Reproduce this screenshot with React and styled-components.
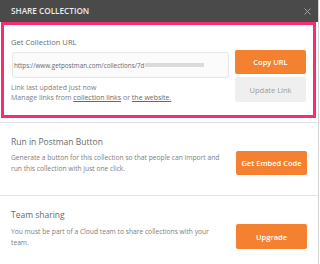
import React from "react";
import styled, { createGlobalStyle } from "styled-components";

const Global = createGlobalStyle`
  html, body { margin: 0; padding: 0; background: #fff; }
  body { font-family: "Open Sans", "Liberation Sans", sans-serif; }
  * { box-sizing: border-box; }
`;

const Modal = styled.div`
  width: 319px;
  height: 264px;
  border-right: 1px solid #d4d4d4;
  background: #fff;
  overflow: hidden;
`;

const Header = styled.header`
  height: 22px;
  background: #4a4a4a;
  display: flex;
  align-items: center;
  justify-content: space-between;
  padding: 0 7px 0 11px;
`;

const Title = styled.h1`
  margin: 0;
  color: #ececec;
  font-size: 8.2px;
  font-weight: 600;
  line-height: 10px;
`;

const Close = styled.svg`
  width: 7px;
  height: 7px;
  display: block;
`;

const Section = styled.section`
  border-bottom: 1px solid #e2e2e2;
  padding: ${(p) => (p.$highlight ? "0 0 4px 0" : "14px 11px 20px 11px")};
`;

const Highlight = styled.div`
  margin: 0 2px 0 1px;
  border: 3px solid #f62e6f;
  padding: 12px 6px 12px 7px;
`;

const Heading = styled.h2`
  margin: 0 0 ${(p) => p.$gap || 4}px 0;
  color: #6a6a6a;
  font-size: ${(p) => p.$size || 8.5}px;
  font-weight: 400;
  line-height: 10px;
`;

const UrlGrid = styled.div`
  display: grid;
  grid-template-columns: 218px 71px;
  column-gap: 6px;
`;

const LeftCol = styled.div`
  padding-top: 2px;
`;

const RightCol = styled.div`
  display: flex;
  flex-direction: column;
  gap: 3px;
`;

const UrlField = styled.div`
  height: 26px;
  margin-left: 1px;
  border: 1px solid #e6e6e6;
  border-radius: 3px;
  background: #fbfbfb;
  display: flex;
  align-items: center;
  padding-left: 1px;
  color: #6a6a6a;
  font-size: 6.3px;
  white-space: nowrap;
`;

const Redacted = styled.span`
  display: inline-block;
  width: 59px;
  height: 4px;
  margin-left: 1px;
  background: #dadada;
  filter: blur(0.7px);
`;

const Meta = styled.p`
  margin: ${(p) => (p.$first ? "5px" : "0")} 0 0 0;
  color: #7e7e7e;
  font-size: 7px;
  line-height: 10px;
  white-space: nowrap;
`;

const Link = styled.a`
  color: #6a6a6a;
  text-decoration: underline;
`;

const Row = styled.div`
  display: flex;
  align-items: center;
  justify-content: space-between;
`;

const Desc = styled.p`
  margin: 0;
  width: 216px;
  color: #7e7e7e;
  font-size: 6.7px;
  line-height: 11px;
`;

const Button = styled.button`
  width: 71px;
  height: ${(p) => p.$h || 24}px;
  border: none;
  border-radius: 2px;
  padding: 0;
  font-family: inherit;
  font-size: 7.5px;
  font-weight: ${(p) => (p.$secondary ? 400 : 600)};
  background: ${(p) => (p.$secondary ? "#efefef" : "#f4812f")};
  color: ${(p) => (p.$secondary ? "#9c9c9c" : "#ffffff")};
  cursor: pointer;
`;

export default function App() {
  return (
    <>
      <Global />
      <Modal>
        <Header>
          <Title>SHARE COLLECTION</Title>
          <Close viewBox="0 0 7 7">
            <path d="M0.5 0.5 L6.5 6.5 M6.5 0.5 L0.5 6.5" stroke="#a0a0a0" strokeWidth="1" fill="none" />
          </Close>
        </Header>

        <Section $highlight>
          <Highlight>
            <Heading $gap={3} $size={7.6}>Get Collection URL</Heading>
            <UrlGrid>
              <LeftCol>
                <UrlField>
                  https://www.getpostman.com/collections/7d
                  <Redacted />
                </UrlField>
                <Meta $first>Link last updated just now</Meta>
                <Meta>
                  Manage links from <Link>collection links</Link> or <Link>the website.</Link>
                </Meta>
              </LeftCol>
              <RightCol>
                <Button>Copy URL</Button>
                <Button $secondary $h={25}>Update Link</Button>
              </RightCol>
            </UrlGrid>
          </Highlight>
        </Section>

        <Section>
          <Heading>Run in Postman Button</Heading>
          <Row>
            <Desc>
              Generate a button for this collection so that people can import and run this collection with just one click.
            </Desc>
            <Button>Get Embed Code</Button>
          </Row>
        </Section>

        <Section>
          <Heading>Team sharing</Heading>
          <Row>
            <Desc>
              You must be part of a Cloud team to share collections with your team.
            </Desc>
            <Button $h={25}>Upgrade</Button>
          </Row>
        </Section>
      </Modal>
    </>
  );
}
